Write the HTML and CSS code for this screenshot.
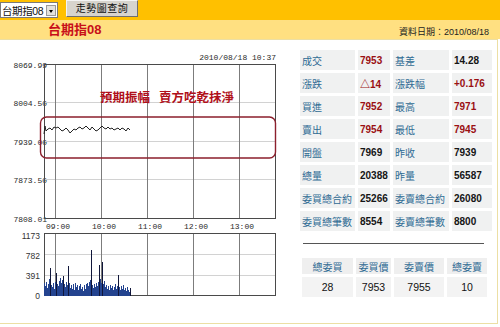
FILE: index.html
```html
<!DOCTYPE html>
<html lang="zh-TW">
<head>
    <meta charset="UTF-8">
    <title>台期指08 走勢圖</title>
    <link rel="stylesheet" href="styles.css">
</head>
<body>
    <div class="topbar">
        <div class="picker">
            <span class="picker-text">台期指08</span>
            <span class="picker-arrow"></span>
        </div>
        <div class="query-btn">走勢圖查詢</div>
    </div>

    <div class="titlebar">
        <span class="title">台期指08</span>
        <span class="data-date">資料日期：2010/08/18</span>
    </div>

    <div class="content">
        <!-- 走勢圖 -->
        <svg class="chart" width="297" height="283" viewBox="0 40 297 283">
            <text class="stamp" x="276" y="59.5" text-anchor="end">2010/08/18 10:37</text>

            <g class="axis-mono" text-anchor="end">
                <text x="47" y="68">8069.99</text>
                <text x="47" y="106">8004.50</text>
                <text x="47" y="144.5">7939.00</text>
                <text x="47" y="183">7873.50</text>
                <text x="47" y="221.5">7808.01</text>
            </g>

            <g class="grid-h">
                <line x1="44" y1="102.5" x2="275" y2="102.5"/>
                <line x1="44" y1="141.5" x2="275" y2="141.5"/>
                <line x1="44" y1="179.5" x2="275" y2="179.5"/>
                <line x1="44" y1="254.5" x2="275" y2="254.5"/>
                <line x1="44" y1="275.5" x2="275" y2="275.5"/>
            </g>
            <g class="grid-v">
                <line x1="55.5" y1="64" x2="55.5" y2="218"/>
                <line x1="101.5" y1="64" x2="101.5" y2="218"/>
                <line x1="147.5" y1="64" x2="147.5" y2="218"/>
                <line x1="193.5" y1="64" x2="193.5" y2="218"/>
                <line x1="239.5" y1="64" x2="239.5" y2="218"/>
                <line x1="55.5" y1="233" x2="55.5" y2="296"/>
                <line x1="101.5" y1="233" x2="101.5" y2="296"/>
                <line x1="147.5" y1="233" x2="147.5" y2="296"/>
                <line x1="193.5" y1="233" x2="193.5" y2="296"/>
                <line x1="239.5" y1="233" x2="239.5" y2="296"/>
            </g>

            <rect class="plot-frame" x="44.5" y="64.5" width="231" height="154"/>
            <rect class="plot-frame" x="44.5" y="233.5" width="231" height="62"/>

            <polyline class="price-line" points="44,134 45,126 46,131 48,129 50,128 52,130 54,127 56,128 58,127 60,129 62,131 64,130 66,128 68,130 70,133 72,131 74,129 76,130 78,128 80,127 82,129 84,128 86,126 88,128 90,130 92,127 94,129 96,131 98,130 100,128 102,126 104,128 106,129 108,127 110,129 112,128 114,130 116,129 118,128 120,130 122,128 124,129 126,131 128,128 130,130"/>

            <g class="axis-mono" text-anchor="middle">
                <text x="58" y="229">09:00</text>
                <text x="104" y="229">10:00</text>
                <text x="150" y="229">11:00</text>
                <text x="196" y="229">12:00</text>
                <text x="242" y="229">13:00</text>
            </g>

            <g class="axis-vol" text-anchor="end">
                <text x="40" y="238.5">1173</text>
                <text x="40" y="258.5">782</text>
                <text x="40" y="279">391</text>
                <text x="40" y="299">0</text>
            </g>

            <path class="vol-bars" d="M44.5 296V283M45.5 296V286M46.5 296V282M47.5 296V288M48.5 296V284M49.5 296V279M50.5 296V285M51.5 296V285M52.5 296V287M53.5 296V283M54.5 296V289M55.5 296V282M56.5 296V284M57.5 296V284M58.5 296V286M59.5 296V281M60.5 296V278M61.5 296V283M62.5 296V280M63.5 296V276M64.5 296V284M65.5 296V287M66.5 296V282M67.5 296V285M68.5 296V283M69.5 296V283M70.5 296V288M71.5 296V285M72.5 296V289M73.5 296V284M74.5 296V290M75.5 296V283M76.5 296V287M77.5 296V285M78.5 296V290M79.5 296V286M80.5 296V284M81.5 296V289M82.5 296V287M83.5 296V291M84.5 296V285M85.5 296V289M86.5 296V284M87.5 296V283M88.5 296V286M89.5 296V282M90.5 296V280M91.5 296V284M92.5 296V285M93.5 296V288M94.5 296V284M95.5 296V287M96.5 296V283M97.5 296V286M98.5 296V282M99.5 296V281M100.5 296V279M101.5 296V283M102.5 296V282M103.5 296V284M104.5 296V281M105.5 296V287M106.5 296V285M107.5 296V289M108.5 296V286M109.5 296V290M110.5 296V285M111.5 296V288M112.5 296V286M113.5 296V290M114.5 296V287M115.5 296V284M116.5 296V289M117.5 296V286M118.5 296V283M119.5 296V287M120.5 296V290M121.5 296V286M122.5 296V289M123.5 296V285M124.5 296V290M125.5 296V288M126.5 296V291M127.5 296V287M128.5 296V290M129.5 296V292M130.5 296V289"/>
            <path class="vol-spikes" d="M50.5 296V268M56.5 296V273M68.5 296V266M91.5 296V250M99.5 296V265M102.5 296V262M118.5 296V275M63.5 296V276M130.5 296V288"/>

            <!-- 標註 -->
            <rect class="note-box" x="40.5" y="117" width="235" height="41" rx="6"/>
            <text class="note-text" x="100" y="102">預期振幅</text>
            <text class="note-text" x="159" y="102">賣方吃乾抹淨</text>
        </svg>

        <!-- 報價 -->
        <div class="quote">
            <table class="quote-table">
                <tr><td class="lbl">成交</td><td class="val up">7953</td><td class="lbl">基差</td><td class="val">14.28</td></tr>
                <tr><td class="lbl">漲跌</td><td class="val up">△14</td><td class="lbl">漲跌幅</td><td class="val up">+0.176</td></tr>
                <tr><td class="lbl">買進</td><td class="val up">7952</td><td class="lbl">最高</td><td class="val up">7971</td></tr>
                <tr><td class="lbl">賣出</td><td class="val up">7954</td><td class="lbl">最低</td><td class="val up">7945</td></tr>
                <tr><td class="lbl">開盤</td><td class="val">7969</td><td class="lbl">昨收</td><td class="val">7939</td></tr>
                <tr><td class="lbl">總量</td><td class="val">20388</td><td class="lbl">昨量</td><td class="val">56587</td></tr>
                <tr><td class="lbl">委買總合約</td><td class="val">25266</td><td class="lbl">委賣總合約</td><td class="val">26080</td></tr>
                <tr><td class="lbl">委買總筆數</td><td class="val">8554</td><td class="lbl">委賣總筆數</td><td class="val">8800</td></tr>
            </table>

            <div class="divider"></div>

            <table class="order-table">
                <tr class="head"><td>總委買</td><td>委買價</td><td>委賣價</td><td>總委賣</td></tr>
                <tr class="data"><td>28</td><td>7953</td><td>7955</td><td>10</td></tr>
            </table>
        </div>
    </div>
</body>
</html>
```

FILE: styles.css
```css
/* 基本設定 */
body {
    margin: 0;
    width: 500px;
    font-family: "Liberation Sans", "Noto Sans CJK TC", sans-serif;
    background: #fff;
    color: #111;
}

/* 上方選單列 */
.topbar {
    height: 20px;
    background: #FFC000;
    display: flex;
    align-items: flex-start;
    gap: 8px;
}

.picker {
    margin-top: 2px;
    width: 55px;
    height: 14px;
    border: 1px solid #7a7a7a;
    background: #fff;
    display: flex;
    align-items: center;
    justify-content: space-between;
    padding-right: 1px;
}

.picker-text {
    font-size: 10.5px;
    padding-left: 1px;
    letter-spacing: -0.4px;
}

.picker-arrow {
    width: 10px;
    height: 11px;
    background: #e4e2dc;
    border: 1px solid #9a9a9a;
    box-sizing: border-box;
    position: relative;
}

.picker-arrow::after {
    content: "";
    position: absolute;
    left: 2px;
    top: 4px;
    border-left: 2.5px solid transparent;
    border-right: 2.5px solid transparent;
    border-top: 3px solid #000;
}

.query-btn {
    width: 70px;
    height: 15px;
    background: #d7d4cd;
    border: 1px solid;
    border-color: #f4f4f4 #6f6f6f #6f6f6f #f4f4f4;
    font-size: 10px;
    line-height: 15px;
    text-align: center;
    letter-spacing: 0.5px;
}

/* 標題列 */
.titlebar {
    height: 19px;
    background: #FFE081;
    display: flex;
    justify-content: space-between;
    align-items: center;
    padding: 0 11px 0 48px;
}

.title {
    color: #C8101A;
    font-weight: bold;
    font-size: 13px;
    margin-top: -2px;
}

.data-date {
    font-size: 9px;
    color: #222;
    margin-top: 3px;
}

/* 內容區 */
.content {
    width: 497px;
    height: 283px;
    border: 1px solid #ECDFA4;
    border-left: 0;
    display: flex;
}

.chart {
    display: block;
    flex: none;
}

.stamp,
.axis-mono {
    font-family: "Liberation Mono", monospace;
    font-size: 8px;
    fill: #2a2a2a;
}

.axis-vol {
    font-family: "Liberation Sans", sans-serif;
    font-size: 8.5px;
    fill: #333;
}

.grid-h line {
    stroke: #d2d2d2;
    stroke-width: 1;
}

.grid-v line {
    stroke: #7c7c7c;
    stroke-width: 1;
}

.plot-frame {
    fill: none;
    stroke: #4a4a4a;
    stroke-width: 1;
}

.price-line {
    fill: none;
    stroke: #222;
    stroke-width: 1;
}

.vol-bars {
    stroke: #23438f;
    stroke-width: 1;
}

.vol-spikes {
    stroke: #10163a;
    stroke-width: 1;
}

/* 紅框標註 */
.note-box {
    fill: none;
    stroke: #8c1f2d;
    stroke-width: 1.4;
}

.note-text {
    font-family: "Noto Sans CJK TC", sans-serif;
    font-weight: bold;
    font-size: 12.5px;
    fill: #B0101A;
}

/* 報價表 */
.quote {
    padding-top: 7px;
}

.quote-table {
    border-collapse: separate;
    border-spacing: 3px;
    font-size: 10px;
}

.quote-table td {
    height: 20px;
    padding: 0 0 0 2px;
    background: #f0f1f1;
    white-space: nowrap;
}

.quote-table td:nth-child(1) { width: 53px; }
.quote-table td:nth-child(2) { width: 30px; }
.quote-table td:nth-child(3) { width: 54px; }
.quote-table td:nth-child(4) { width: 38px; }

.lbl {
    color: #2f6b93;
}

.val {
    font-weight: bold;
    color: #151515;
    padding-left: 3px;
}

.val.up {
    color: #9a0f12;
}

.divider {
    margin: 9px 11px 0 6px;
    height: 1px;
    background: #555;
}

.order-table {
    margin: 11px 0 0 2px;
    border-collapse: separate;
    border-spacing: 3px;
    font-size: 10px;
    text-align: center;
}

.order-table td {
    padding: 0;
    background: #efefef;
}

.order-table td:nth-child(1) { width: 51px; }
.order-table td:nth-child(2) { width: 35px; }
.order-table td:nth-child(3) { width: 50px; }
.order-table td:nth-child(4) { width: 40px; }

.order-table .head td {
    height: 16px;
    color: #2f6b93;
}

.order-table .data td {
    height: 20px;
    background: #f3f3f3;
    color: #111;
    font-size: 10.5px;
}
```
